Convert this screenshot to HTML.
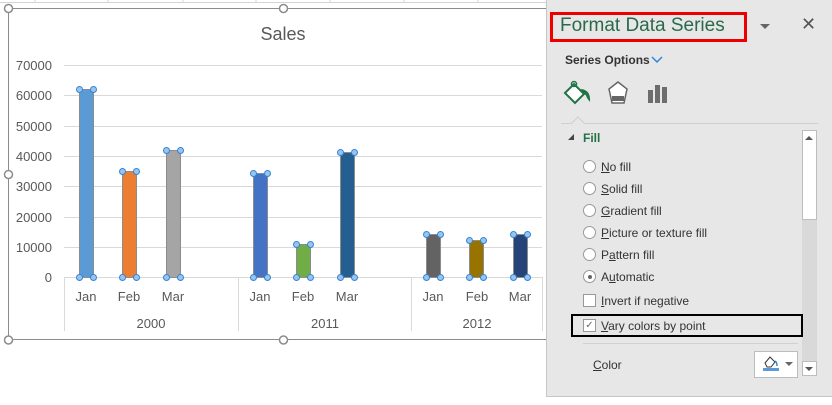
<!DOCTYPE html>
<html><head><meta charset="utf-8"><style>
body{margin:0;width:832px;height:405px;background:#fff;position:relative;overflow:hidden;font-family:"Liberation Sans",Arial,sans-serif}
#pane{position:absolute;left:546px;top:0;width:286px;height:397px;background:#e7e7e7;border-left:1px solid #c6c6c6;border-bottom:1px solid #c6c6c6;box-sizing:border-box}
.t{position:absolute;font-size:12px;color:#333;white-space:nowrap}
.u{text-decoration:underline}
.rad{position:absolute;width:13px;height:13px;border:1px solid #999;border-radius:50%;background:#fff;box-sizing:border-box}
</style></head><body>
<svg width="546" height="405" style="position:absolute;left:0;top:0">
<line x1="0" y1="2.5" x2="546" y2="2.5" stroke="#d4d4d4"/>
<g stroke="#d4d4d4"><line x1="35" y1="0" x2="35" y2="3"/><line x1="108" y1="0" x2="108" y2="3"/><line x1="183" y1="0" x2="183" y2="3"/><line x1="256" y1="0" x2="256" y2="3"/><line x1="330" y1="0" x2="330" y2="3"/><line x1="404" y1="0" x2="404" y2="3"/><line x1="478" y1="0" x2="478" y2="3"/></g>
<rect x="8.5" y="8.5" width="560" height="331" fill="#fff" stroke="#8c8c8c"/>
<text x="283" y="40" font-size="18" fill="#595959" text-anchor="middle" font-family="Liberation Sans">Sales</text>
<g stroke="#d9d9d9">
<line x1="64" y1="65.5" x2="542" y2="65.5"/><line x1="64" y1="95.5" x2="542" y2="95.5"/><line x1="64" y1="126.5" x2="542" y2="126.5"/><line x1="64" y1="156.5" x2="542" y2="156.5"/><line x1="64" y1="186.5" x2="542" y2="186.5"/><line x1="64" y1="217.5" x2="542" y2="217.5"/><line x1="64" y1="247.5" x2="542" y2="247.5"/><line x1="64" y1="277.5" x2="542" y2="277.5"/>
<line x1="64.5" y1="277" x2="64.5" y2="331"/><line x1="238.5" y1="277" x2="238.5" y2="331"/><line x1="411.5" y1="277" x2="411.5" y2="331"/><line x1="542.5" y1="277" x2="542.5" y2="331"/>
</g>
<g font-size="13" fill="#595959" text-anchor="end" font-family="Liberation Sans">
<text x="52" y="70">70000</text><text x="52" y="100">60000</text><text x="52" y="131">50000</text><text x="52" y="161">40000</text><text x="52" y="191">30000</text><text x="52" y="222">20000</text><text x="52" y="252">10000</text><text x="52" y="282">0</text>
</g>
<g font-size="13" fill="#595959" text-anchor="middle" font-family="Liberation Sans">
<text x="86" y="301">Jan</text><text x="129" y="301">Feb</text><text x="173" y="301">Mar</text>
<text x="260" y="301">Jan</text><text x="303" y="301">Feb</text><text x="347" y="301">Mar</text>
<text x="433" y="301">Jan</text><text x="477" y="301">Feb</text><text x="520" y="301">Mar</text>
<text x="151" y="328">2000</text><text x="325" y="328">2011</text><text x="477" y="328">2012</text>
</g>
<g stroke="#8c8c8c" stroke-width="1">
<rect x="79.5" y="89.5" width="14" height="188" fill="#5b9bd5"/>
<rect x="122.5" y="171.5" width="14" height="106" fill="#ed7d31"/>
<rect x="166.5" y="150.5" width="14" height="127" fill="#a5a5a5"/>
<rect x="253.5" y="173.5" width="14" height="104" fill="#4472c4"/>
<rect x="296.5" y="244.5" width="14" height="33" fill="#70ad47"/>
<rect x="340.5" y="152.5" width="14" height="125" fill="#255e91"/>
<rect x="426.5" y="234.5" width="14" height="43" fill="#636363"/>
<rect x="469.5" y="240.5" width="14" height="37" fill="#997300"/>
<rect x="513.5" y="234.5" width="14" height="43" fill="#264478"/>
</g>
<g fill="#9dc3e6" stroke="#2e86de" stroke-width="1">
<circle cx="79.5" cy="89.5" r="3"/><circle cx="93.5" cy="89.5" r="3"/><circle cx="79.5" cy="277.5" r="3"/><circle cx="93.5" cy="277.5" r="3"/>
<circle cx="122.5" cy="171.5" r="3"/><circle cx="136.5" cy="171.5" r="3"/><circle cx="122.5" cy="277.5" r="3"/><circle cx="136.5" cy="277.5" r="3"/>
<circle cx="166.5" cy="150.5" r="3"/><circle cx="180.5" cy="150.5" r="3"/><circle cx="166.5" cy="277.5" r="3"/><circle cx="180.5" cy="277.5" r="3"/>
<circle cx="253.5" cy="173.5" r="3"/><circle cx="267.5" cy="173.5" r="3"/><circle cx="253.5" cy="277.5" r="3"/><circle cx="267.5" cy="277.5" r="3"/>
<circle cx="296.5" cy="244.5" r="3"/><circle cx="310.5" cy="244.5" r="3"/><circle cx="296.5" cy="277.5" r="3"/><circle cx="310.5" cy="277.5" r="3"/>
<circle cx="340.5" cy="152.5" r="3"/><circle cx="354.5" cy="152.5" r="3"/><circle cx="340.5" cy="277.5" r="3"/><circle cx="354.5" cy="277.5" r="3"/>
<circle cx="426.5" cy="234.5" r="3"/><circle cx="440.5" cy="234.5" r="3"/><circle cx="426.5" cy="277.5" r="3"/><circle cx="440.5" cy="277.5" r="3"/>
<circle cx="469.5" cy="240.5" r="3"/><circle cx="483.5" cy="240.5" r="3"/><circle cx="469.5" cy="277.5" r="3"/><circle cx="483.5" cy="277.5" r="3"/>
<circle cx="513.5" cy="234.5" r="3"/><circle cx="527.5" cy="234.5" r="3"/><circle cx="513.5" cy="277.5" r="3"/><circle cx="527.5" cy="277.5" r="3"/>
</g>
<g fill="#fff" stroke="#8c8c8c" stroke-width="1.5">
<circle cx="8.5" cy="8.5" r="4"/><circle cx="283.5" cy="8.5" r="4"/><circle cx="8.5" cy="174.5" r="4"/><circle cx="8.5" cy="340" r="4"/><circle cx="283.5" cy="340" r="4"/>
</g>
</svg>
<div id="pane">
<div style="position:absolute;left:3px;top:12px;width:197px;height:30px;border:3px solid #e00;box-sizing:border-box"></div>
<div class="t" style="left:13px;top:15px;font-size:19px;color:#2a6a4a">Format Data Series</div>
<div style="position:absolute;left:213px;top:24px;border-left:5px solid transparent;border-right:5px solid transparent;border-top:5px solid #666"></div>
<div class="t" style="left:254px;top:14px;font-size:18px;color:#555">✕</div>
<div class="t" style="left:18px;top:53px;font-weight:bold;color:#333">Series Options</div>
<svg style="position:absolute;left:104px;top:56px" width="12" height="8"><path d="M1 1L6 6L11 1" fill="none" stroke="#2e86de" stroke-width="1.5"/></svg>
<svg style="position:absolute;left:16px;top:80px" width="30" height="26"><path d="M2 13L11 4L21 14L12 23Z" fill="#fff" stroke="#217346" stroke-width="2"/><circle cx="11" cy="4" r="2.5" fill="none" stroke="#217346" stroke-width="1.5"/><path d="M18 9Q28 10 27 22L24 18Q23 14 19 13Z" fill="#217346"/></svg>
<svg style="position:absolute;left:60px;top:80px" width="22" height="26"><path d="M11 2L20 9L17 23H5L2 9Z" fill="#fff" stroke="#666" stroke-width="1.5"/><rect x="5" y="16" width="12" height="5" fill="#666"/></svg>
<svg style="position:absolute;left:100px;top:83px" width="22" height="22"><rect x="1" y="7" width="5" height="13" fill="#6d6d6d"/><rect x="8" y="2" width="5" height="18" fill="#6d6d6d"/><rect x="15" y="4" width="5" height="16" fill="#6d6d6d"/></svg>
<div style="position:absolute;left:14px;top:123px;width:257px;height:1px;background:#cfcfcf"></div>
<svg style="position:absolute;left:24px;top:114px" width="14" height="10"><path d="M0 10L7 3L14 10" fill="#e7e7e7" stroke="#cfcfcf"/></svg>
<div style="position:absolute;left:21px;top:134px;border-left:6px solid transparent;border-bottom:6px solid #444"></div>
<div class="t" style="left:36px;top:131px;font-weight:bold;color:#217346">Fill</div>
<div style="position:absolute;left:255px;top:130px;width:15px;height:246px;background:#d9d9d9"></div>
<div style="position:absolute;left:255px;top:130px;width:15px;height:90px;background:#fff;border:1px solid #bdbdbd;box-sizing:border-box"></div>
<div style="position:absolute;left:258px;top:136px;border-left:4px solid transparent;border-right:4px solid transparent;border-bottom:4px solid #555"></div>
<div style="position:absolute;left:255px;top:361px;width:15px;height:15px;background:#fff;border:1px solid #bdbdbd;box-sizing:border-box"></div>
<div style="position:absolute;left:258px;top:367px;border-left:4px solid transparent;border-right:4px solid transparent;border-top:4px solid #555"></div>
<div class="rad" style="left:36px;top:160px"></div><div class="t" style="left:54px;top:160px"><span class="u">N</span>o fill</div>
<div class="rad" style="left:36px;top:182px"></div><div class="t" style="left:54px;top:182px"><span class="u">S</span>olid fill</div>
<div class="rad" style="left:36px;top:204px"></div><div class="t" style="left:54px;top:204px"><span class="u">G</span>radient fill</div>
<div class="rad" style="left:36px;top:226px"></div><div class="t" style="left:54px;top:226px"><span class="u">P</span>icture or texture fill</div>
<div class="rad" style="left:36px;top:248px"></div><div class="t" style="left:54px;top:248px">P<span class="u">a</span>ttern fill</div>
<div class="rad" style="left:36px;top:270px"><div style="position:absolute;left:3.5px;top:3.5px;width:4px;height:4px;border-radius:50%;background:#666"></div></div><div class="t" style="left:54px;top:270px">A<span class="u">u</span>tomatic</div>
<div style="position:absolute;left:36px;top:294px;width:13px;height:13px;border:1px solid #999;background:#fff;box-sizing:border-box"></div><div class="t" style="left:54px;top:294px"><span class="u">I</span>nvert if negative</div>
<div style="position:absolute;left:24px;top:314px;width:232px;height:23px;border:2px solid #000;box-sizing:border-box"></div>
<div style="position:absolute;left:36px;top:319px;width:13px;height:13px;border:1px solid #999;background:#fff;box-sizing:border-box;font-size:10px;line-height:11px;color:#666;text-align:center">✓</div><div class="t" style="left:54px;top:319px"><span class="u">V</span>ary colors by point</div>
<div style="position:absolute;left:36px;top:343px;width:215px;height:1px;background:#d0d0d0"></div>
<div class="t" style="left:46px;top:358px"><span class="u">C</span>olor</div>
<div style="position:absolute;left:207px;top:351px;width:44px;height:27px;background:#fff;border:1px solid #bdbdbd;box-sizing:border-box"></div>
<svg style="position:absolute;left:215px;top:353px" width="18" height="22"><path d="M3 10L8 4L13 9L9 14H5Z" fill="#fff" stroke="#333"/><path d="M13 8Q15 9 15 13" stroke="#2e86de" fill="none" stroke-width="1.5"/><rect x="1" y="15" width="16" height="3" fill="#5b9bd5"/></svg>
<div style="position:absolute;left:238px;top:362px;border-left:4px solid transparent;border-right:4px solid transparent;border-top:4px solid #666"></div>
</div>
</body></html>
